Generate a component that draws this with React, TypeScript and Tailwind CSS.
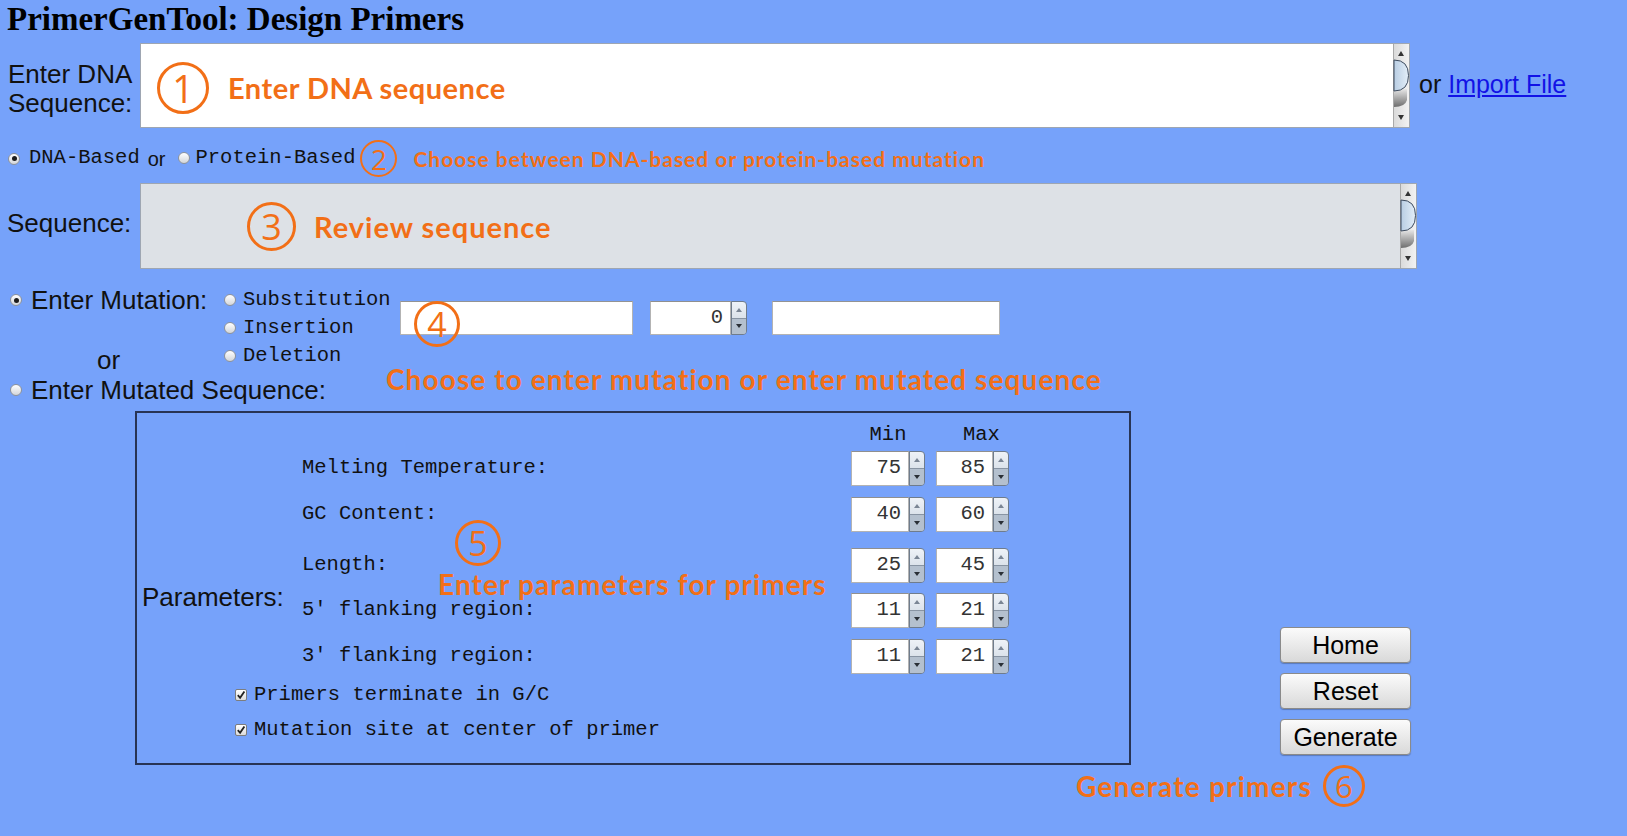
import React from 'react';
import clsx from 'clsx';

const Circled = ({ n, className }: { n: string; className: string }) => (
    <div
        className={clsx(
            "flex shrink-0 items-center justify-center rounded-full border-[#f26f17] font-['Open_Sans'] font-medium leading-none text-[#f26f17]",
            className
        )}
    >
        {n}
    </div>
);

const Note = ({ children, className }: { children: React.ReactNode; className: string }) => (
    <span className={clsx("whitespace-nowrap font-['Lato'] font-bold text-[#f26f17]", className)}>{children}</span>
);

const Radio = ({ checked }: { checked?: boolean }) => (
    <span className="inline-flex h-[12px] w-[12px] shrink-0 items-center justify-center rounded-full border border-[#8e939b] bg-linear-to-b from-white to-[#d3d6da]">
        {checked && <span className="h-[5px] w-[5px] rounded-full bg-[#1c1c1c]" />}
    </span>
);

const Check = () => (
    <span className="inline-flex h-[12px] w-[12px] shrink-0 items-center justify-center rounded-[2px] border border-[#7d7d7d] bg-linear-to-b from-white to-[#dcdcdc]">
        <svg width="10" height="10" viewBox="0 0 10 10">
            <path d="M1.8 5.2 L4.1 7.8 L8.4 1.4" fill="none" stroke="#222" strokeWidth="1.8" />
        </svg>
    </span>
);

// aqua style scrollbar on the text areas
const ScrollBar = ({ h, id }: { h: number; id: string }) => (
    <svg width="16" height={h} viewBox={`0 0 16 ${h}`} className="shrink-0">
        <defs>
            <linearGradient id={`track-${id}`} x1="0" x2="1" y1="0" y2="0">
                <stop offset="0" stopColor="#d9d9d9" />
                <stop offset="1" stopColor="#f2f2f2" />
            </linearGradient>
            <linearGradient id={`thumb-${id}`} x1="0" x2="1" y1="0" y2="0">
                <stop offset="0" stopColor="#b8cde3" />
                <stop offset="1" stopColor="#e3eef8" />
            </linearGradient>
            <linearGradient id={`shade-${id}`} x1="0" x2="0" y1="0" y2="1">
                <stop offset="0" stopColor="#e6e6e6" />
                <stop offset="1" stopColor="#6e6e6e" />
            </linearGradient>
        </defs>
        <rect width="16" height={h} fill={`url(#track-${id})`} />
        <line x1="0.5" y1="0" x2="0.5" y2={h} stroke="#a9a9a9" />
        <path d="M8 7 L11 12 L5 12 Z" fill="#333" />
        <path d={`M1 ${h - 20} Q12 ${h - 20} 14 ${h - 27} L14 ${h - 38} L1 ${h - 38} Z`} fill={`url(#shade-${id})`} />
        <path d="M1 16 Q15.5 16 15.5 31.5 Q15.5 47 1 47 Z" fill={`url(#thumb-${id})`} stroke="#3d4b5e" strokeWidth="1" />
        <path d={`M5 ${h - 12} L11 ${h - 12} L8 ${h - 7} Z`} fill="#333" />
    </svg>
);

const Spinner = () => (
    <div className="flex h-full w-[16px] shrink-0 flex-col overflow-hidden rounded-r-[4px] border border-[#6f7c8c] bg-linear-to-b from-[#eef2f7] to-[#c9d3de]">
        <div className="flex flex-1 items-center justify-center border-b border-[#8894a3]">
            <svg width="6" height="4" viewBox="0 0 6 4">
                <path d="M3 0 L6 4 L0 4 Z" fill="#7a8594" />
            </svg>
        </div>
        <div className="flex flex-1 items-center justify-center bg-[#b4c0ce]">
            <svg width="6" height="4" viewBox="0 0 6 4">
                <path d="M0 0 L6 0 L3 4 Z" fill="#2a2f36" />
            </svg>
        </div>
    </div>
);

const NumberBox = ({ value, className }: { value: string; className: string }) => (
    <div className={clsx('flex', className)}>
        <div className="flex flex-1 items-center justify-end border border-[#b3b3b3] border-t-[#8f8f8f] bg-white pr-[7px] font-['Liberation_Mono'] text-[20.5px] text-[#333]">
            {value}
        </div>
        <Spinner />
    </div>
);

const TextBox = ({ className }: { className: string }) => (
    <div className={clsx('h-[34px] border border-[#b3b3b3] border-t-[#939393] bg-white', className)} />
);

const Btn = ({ children }: { children: React.ReactNode }) => (
    <button className="h-[36px] w-[131px] rounded-[4px] border border-[#8a8a8a] bg-linear-to-b from-[#fbfbfb] to-[#d9d9d9] text-[25px] leading-none text-black shadow-[0_1px_1px_rgba(0,0,0,0.25)]">
        {children}
    </button>
);

const params = [
    { label: 'Melting Temperature:', min: '75', max: '85', mt: 'mt-[4px]' },
    { label: 'GC Content:', min: '40', max: '60', mt: 'mt-[11px]' },
    { label: 'Length:', min: '25', max: '45', mt: 'mt-[16px]' },
    { label: "5' flanking region:", min: '11', max: '21', mt: 'mt-[10px]' },
    { label: "3' flanking region:", min: '11', max: '21', mt: 'mt-[11px]' },
];

export default function App() {
    return (
        <div className="min-h-screen w-full overflow-hidden bg-[#76a2fa] font-['Liberation_Sans'] text-[#111]">
            <h1 className="mt-[3px] pl-[7px] font-['Liberation_Serif'] text-[33px] font-bold leading-none text-black">
                PrimerGenTool: Design Primers
            </h1>

            {/* DNA input */}
            <div className="mt-[7px] flex items-start">
                <div className="mt-[17px] w-[140px] pl-[8px] text-[26px] leading-[29px]">
                    Enter DNA
                    <br />
                    Sequence:
                </div>
                <div className="relative flex h-[85px] w-[1270px] border border-[#9ea6b2] bg-white">
                    <div className="flex-1" />
                    <ScrollBar h={83} id="dna" />
                    <div className="absolute left-[16px] top-[18px] flex items-center gap-[19px]">
                        <Circled n="1" className="h-[52px] w-[52px] border-[3.5px] text-[38px]" />
                        <Note className="text-[29px] tracking-[0.5px]">Enter DNA sequence</Note>
                    </div>
                </div>
                <div className="ml-[9px] mt-[27px] text-[25px] leading-[29px]">
                    or{' '}
                    <a href="#" className="text-[#1212e6] underline">
                        Import File
                    </a>
                </div>
            </div>

            {/* DNA / protein */}
            <div className="mt-[12px] flex h-[37px] items-center pl-[8px]">
                <Radio checked />
                <span className="ml-[9px] font-['Liberation_Mono'] text-[20.5px]">DNA-Based</span>
                <span className="ml-[8px] text-[20px]">or</span>
                <span className="ml-[12px]">
                    <Radio />
                </span>
                <span className="ml-[6px] font-['Liberation_Mono'] text-[20.5px]">Protein-Based</span>
                <Circled n="2" className="ml-[5px] h-[37px] w-[37px] border-[2.5px] text-[28px]" />
                <Note className="ml-[16px] text-[21px] tracking-[1px]">
                    Choose between DNA-based or protein-based mutation
                </Note>
            </div>

            {/* Review */}
            <div className="mt-[6px] flex items-start">
                <div className="mt-[26px] w-[140px] pl-[7px] text-[26px] leading-[29px]">Sequence:</div>
                <div className="relative flex h-[86px] w-[1277px] border border-[#9ea6b2] bg-[#dde1e6]">
                    <div className="flex-1" />
                    <ScrollBar h={84} id="seq" />
                    <div className="absolute left-[106px] top-[18px] flex items-center gap-[18px]">
                        <Circled n="3" className="h-[49px] w-[49px] border-[3px] text-[36px]" />
                        <Note className="text-[29px] tracking-[1px]">Review sequence</Note>
                    </div>
                </div>
            </div>

            {/* Mutation */}
            <div className="relative mt-[17px] flex items-start">
                <div className="flex w-[221px] flex-col text-[26px]">
                    <div className="flex h-[28px] items-center pl-[10px]">
                        <Radio checked />
                        <span className="ml-[9px] leading-[28px]">Enter Mutation:</span>
                    </div>
                    <div className="ml-[97px] mt-[32px] h-[28px] leading-[28px]">or</div>
                    <div className="mt-[2px] flex h-[28px] items-center pl-[10px]">
                        <Radio />
                        <span className="ml-[9px] whitespace-nowrap leading-[28px]">Enter Mutated Sequence:</span>
                    </div>
                </div>
                <div className="flex w-[179px] flex-col font-['Liberation_Mono'] text-[20.5px]">
                    {['Substitution', 'Insertion', 'Deletion'].map((t) => (
                        <div key={t} className="flex h-[28px] items-center pl-[3px]">
                            <Radio />
                            <span className="ml-[7px]">{t}</span>
                        </div>
                    ))}
                </div>
                <div className="mt-[15px] flex items-start">
                    <TextBox className="w-[233px]" />
                    <NumberBox value="0" className="ml-[17px] h-[34px] w-[97px]" />
                    <TextBox className="ml-[25px] w-[228px]" />
                </div>
                <Circled n="4" className="absolute left-[414px] top-[15px] h-[46px] w-[46px] border-[3px] text-[34px]" />
                <Note className="absolute left-[386px] top-[78px] text-[28px] leading-[30px] tracking-[1.1px]">
                    Choose to enter mutation or enter mutated sequence
                </Note>
            </div>

            {/* Parameters + buttons */}
            <div className="mt-[7px] flex items-start">
                <div className="relative ml-[135px] flex h-[354px] w-[996px] flex-col border-2 border-[#283454]">
                    <div className="flex items-start">
                        <div className="w-[165px] pl-[5px] pt-[170px] text-[26px] leading-[29px]">Parameters:</div>
                        <div className="flex flex-col font-['Liberation_Mono'] text-[20.5px]">
                            <div className="mt-[10px] flex h-[24px] items-center">
                                <div className="w-[549px]" />
                                <span className="w-[74px] text-center">Min</span>
                                <span className="ml-[11px] pl-[27px]">Max</span>
                            </div>
                            {params.map((p) => (
                                <div key={p.label + p.min} className={clsx('flex h-[35px] items-center', p.mt)}>
                                    <div className="w-[549px]">{p.label}</div>
                                    <NumberBox value={p.min} className="h-[35px] w-[74px]" />
                                    <NumberBox value={p.max} className="ml-[11px] h-[35px] w-[73px]" />
                                </div>
                            ))}
                        </div>
                    </div>
                    <div className="mt-[7px] flex h-[28px] items-center pl-[98px] font-['Liberation_Mono'] text-[20.5px]">
                        <Check />
                        <span className="ml-[7px]">Primers terminate in G/C</span>
                    </div>
                    <div className="mt-[7px] flex h-[28px] items-center pl-[98px] font-['Liberation_Mono'] text-[20.5px]">
                        <Check />
                        <span className="ml-[7px]">Mutation site at center of primer</span>
                    </div>
                    <Circled n="5" className="absolute left-[318px] top-[107px] h-[46px] w-[46px] border-[3px] text-[34px]" />
                    <Note className="absolute left-[301px] top-[156px] text-[28px] leading-[30px] tracking-[1.1px]">
                        Enter parameters for primers
                    </Note>
                </div>
                <div className="ml-[149px] mt-[216px] flex flex-col gap-[10px]">
                    <Btn>Home</Btn>
                    <Btn>Reset</Btn>
                    <Btn>Generate</Btn>
                </div>
            </div>

            <div className="ml-[1076px] flex items-center gap-[11px]">
                <Note className="text-[28px] tracking-[1.2px]">Generate primers</Note>
                <Circled n="6" className="h-[42px] w-[42px] border-[3px] text-[31px]" />
            </div>
        </div>
    );
}
